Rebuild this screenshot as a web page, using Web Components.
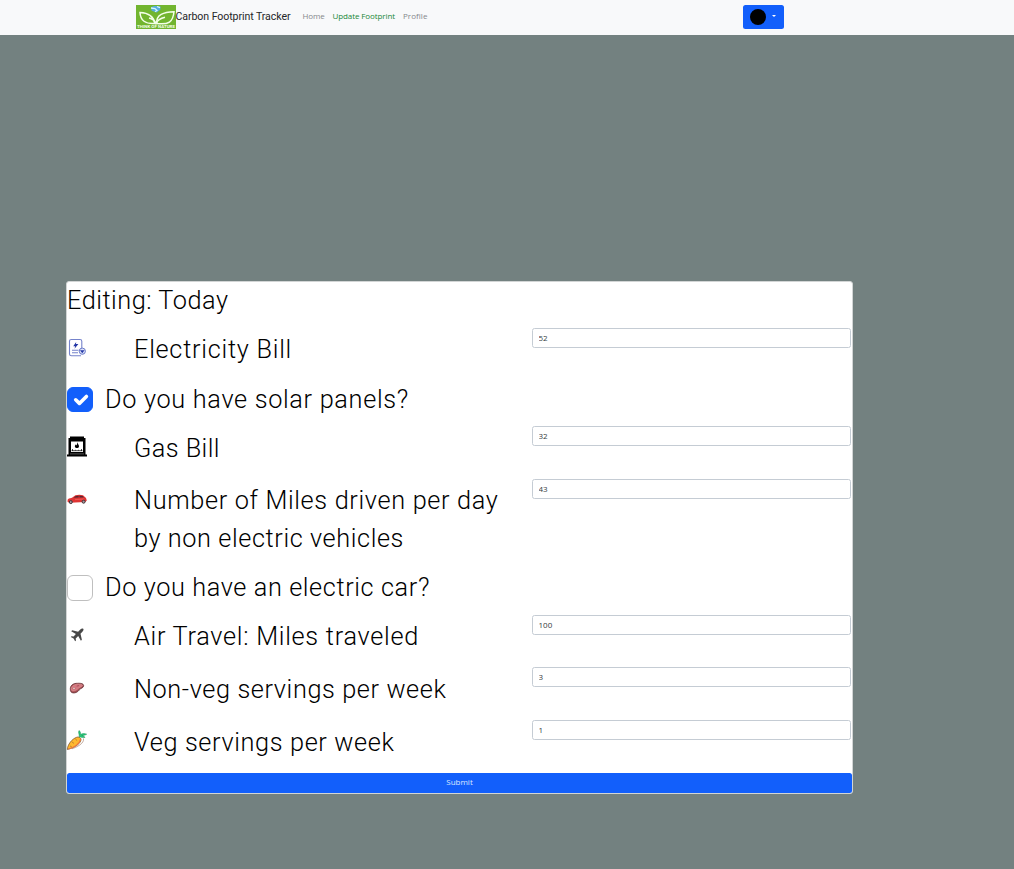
<!DOCTYPE html>
<html lang="en"><head><meta charset="utf-8"><title>Carbon Footprint Tracker</title>
<style>body{margin:0;background:#738180;font-family:Roboto,"Noto Sans",sans-serif;color:#000}</style></head>
<body><tracker-app></tracker-app>
<script>
const define=(name,html,init)=>customElements.define(name,class extends HTMLElement{
  connectedCallback(){
    if(this.shadowRoot)return;
    const t=document.createElement('template');
    t.innerHTML=typeof html==='function'?html(this):html;
    this.attachShadow({mode:'open'}).append(t.content.cloneNode(true));
    if(init)init(this);
  }
});
// Text run spaced evenly to span the width given by its "w" attribute.
define('fit-text','<style>:host{display:block;white-space:nowrap}span{display:inline-block}</style><span><slot></slot></span>',el=>{
  const s=el.shadowRoot.querySelector('span'),n=el.textContent.length;
  s.style.letterSpacing=((+el.getAttribute('w')-s.getBoundingClientRect().width)/n)+'px';
});
const art={
bill:'<g fill="none" stroke="#7583cb" stroke-width="1.1"><path d="M14.8 10V3.2Q14.8 1.5 13 1.5H4.3Q2.5 1.5 2.5 3V16Q2.5 17.8 4.5 17.8H14"/><path d="M5 12.3h6.5M5 14.8h6"/></g><path d="m9.2 4-3 4.3h2L7.5 10.8l3.9-4.7H9Z" fill="#2336a6"/><circle cx="15.3" cy="13.2" r="3.1" fill="#dce2fa" stroke="#6b7bca"/><path d="M13 12.2h4.5l-2.2 3Z" fill="#2438a6"/>',
stove:'<g transform="translate(0 .5)"><path d="M3 0h14v1.5h1.5V18H20v2H0v-2h1.5V1.5H3Z"/><path d="M4 5h12v10.5H4Z" fill="#fff"/><path d="M10.5 5.8c.1 2 2 2.8 1.4 4.6-.5 1.6-3.6 1.5-4-.1-.3-1.3.7-1.8 1.1-2.5l.5 1.2c.8-.8.5-2.1 1-3.2Z"/><path d="M4.5 14.2h11M5.5 12.5v2M8.5 13.3v.7M11.5 13.3v.7M14.5 12.5v2" stroke="#000" stroke-width=".7"/><path d="M3 17.4h14" stroke="#777" stroke-width=".7"/></g>',
car:'<path d="M.6 10.8Q1 9.4 5 8.7L8.4 6.2q4-1 7.6 0l3 2.7.8 2.6-1.5 1.5L3 13.8.6 13Z" fill="#df3434"/><path d="m6.6 8.8 2.3-1.8 2.8-.2v1.8Zm5.8-2 3.2.2 1.3 1.4-4.5.2Z" fill="#5c2730"/><path d="M8 10.6l9-.6" stroke="#f7726b" stroke-width=".6"/><g fill="#a79ca1" stroke="#41353a" stroke-width="1"><circle cx="3.8" cy="13.1" r="1.5"/><circle cx="16.6" cy="12.7" r="1.5"/></g>',
plane:'<path d="M16.2 3.8c-.7-.7-2-.1-2.9.7L11.1 6.7 5.2 5.2 4.2 6.3l4.7 2.6-2.3 2.6-2.1-.3-.7.8 2.8 1.5 1.5 2.7.9-.8-.3-2 2.5-2.4 2.7 4.7 1-1-1.4-5.9 2.1-2.2c.8-.9 1.3-2.1.6-2.8Z" fill="#484848"/>',
meat:'<g transform="translate(0 .7)"><path d="M3.3 11c.2-3.7 3.4-5.5 7.2-5.4 3.2-.2 6.3.3 6.1 2.5-.2 2.4-2.9 2.2-4.5 4.3-1.5 2.1-3.6 3-6 2.8-2-.2-2.9-1.5-2.8-4.2Z" fill="#a54d53" stroke="#632f34" stroke-width=".8"/><path d="M4.2 11.1c.5-3.5 4.3-4.9 7.5-4.6 3.1-.2 4.2.9 3.5 1.8-.9 1.1-3.1 1.2-4.5 3.1-1.4 1.6-6.8 3.3-6.5-.3Z" fill="#d47880" stroke="#e2a09f" stroke-width=".5"/><ellipse cx="7" cy="10.7" rx="1.2" ry=".8" fill="#fff0e9" stroke="#8e434b" stroke-width=".4"/><path d="m9.7 8.4 2.4-.5" stroke="#a94e5b"/></g>',
carrot:'<path d="M16.5 8.5c1 5-7 8.7-11.5 10.3" fill="none" stroke="#a88979" stroke-width=".7"/><path d="M.3 19.5C.5 14.8 4.8 9 9.6 7.3c2.4-1 5.1 1 4.2 3.4C12.3 15 6 18.2.3 19.5Z" fill="#ffb82e" stroke="#6f492d" stroke-width=".7"/><path d="M13.6 8.8C13 14 6.5 17.6 1.5 19" fill="none" stroke="#f4773d" stroke-width="1.1"/><path d="m5 12 2 1.4M8.4 9l1.8 1.7M3 16l1.7.7" stroke="#9a602c" stroke-width=".6"/><path d="M12.2 6.8C12.6 4 10.9 3.2 12 .5c1.2.8 1.7 2 1.5 4 1.8-1.1 3.9-1.2 6.2-.3-1.8 1-3.4 1.4-4.9 1.3 1.5.2 2.7.9 3.2 1.9-2 .4-3.6 0-5.8-.6Z" fill="#27c878" stroke="#168e54" stroke-width=".5"/>'
};
define('tracker-icon',el=>`<style>:host,svg{display:block;width:20px;height:20px;overflow:visible}</style><svg viewBox="0 0 20 20">${art[el.getAttribute('name')]}</svg>`);
define('brand-logo',`<style>:host{display:block;width:40px;height:24px}svg{display:block;overflow:visible}text{font:700 4.4px/1 Roboto,sans-serif;fill:#f5ffe9}</style><svg width="40" height="24" viewBox="0 0 40 24"><path fill="#72b52f" d="M0 0h40v24H0z"/><path d="M15 2.4q3-2.2 9.5-.8l-.2 3.2-3.6 2.8-5-1.8Z" fill="#55aee1"/><path d="m15 3 4 .5 2 2-2 1.3M21 1.5l3 1.2" fill="none" stroke="#d9f5fb" stroke-width="1.3"/><g fill="none" stroke="#f4ffe9" stroke-width="1.5"><path d="M19 18.5Q17 8 4 7.5 4.5 19.5 19 18.5Z"/><path d="M21 18.5C19.5 9.5 28 7 38 6.7 37 17 32.5 20 21 18.5Z"/><path d="M13 13q5 1 7 5.5Q22 14 29 12.3"/></g><text x="1" y="22.9" textLength="38" lengthAdjust="spacingAndGlyphs">THINK OF NATURE</text></svg>`);
define('nav-bar',`<style>
:host{display:block;height:35px;background:#f8f9fa}nav{display:flex;align-items:flex-start;padding:5px 230px 0 136px}
.brand{font-size:10.6px;line-height:24px;color:#252729;width:127px;margin-left:-.5px}.links{display:flex;font:8px/21px "Open Sans",sans-serif;color:#85888b}.links fit-text+fit-text{margin-left:8px}.links .active{color:#218838}
button{margin:0 0 0 auto;width:41px;height:24px;border:0;border-radius:2.5px;background:#125ffb;display:flex;align-items:center;padding:0 7px;gap:6px}.avatar{width:16px;height:16px;border-radius:50%;background:#000}.caret{border:2.5px solid transparent;border-top-color:#fff;border-bottom:0;margin-bottom:3px}</style><nav><brand-logo></brand-logo><div class="brand"><fit-text w="115">Carbon Footprint Tracker</fit-text></div><div class="links"><fit-text w="22">Home</fit-text><fit-text class="active" w="62.5">Update Footprint</fit-text><fit-text w="24.5">Profile</fit-text></div><button aria-label="Account"><span class="avatar"></span><span class="caret"></span></button></nav>`);
define('entry-row',el=>`<style>:host{display:grid;grid-template-columns:67px 398px 319px;box-sizing:border-box}tracker-icon{margin-top:10px}.label{padding-top:3px;font-size:25.3px;font-weight:350;line-height:38px}:host([low]) .label{padding-top:4px}
input{display:block;box-sizing:border-box;width:319px;height:20px;margin:0;border:1px solid #c5ccd4;border-radius:2.5px;padding:0 6px 2px 5.5px;font:8px "Open Sans",sans-serif;color:#343a40;background:#fff}</style>
<tracker-icon name="${el.getAttribute('icon')}"></tracker-icon><div class="label"><slot></slot></div><div><input value="${el.getAttribute('value')}"></div>`);
define('check-row',el=>`<style>:host{display:flex;font-size:25.3px;font-weight:350;line-height:38px}.box{box-sizing:border-box;width:26px;height:26px;margin:8px 12px 0 0;border:1px solid #bfbfbf;border-radius:6px;background:#fff}.on{background:#125ffb;border-color:#125ffb;height:25px}svg{display:block}.label{padding-top:2px}</style><div class="box ${el.hasAttribute('checked')?'on':''}">${el.hasAttribute('checked')?'<svg width="24" height="23" viewBox="0 0 24 23"><path d="m7.7 11.8 3.7 3.6 7-7" fill="none" stroke="#fff" stroke-width="3.6" stroke-linecap="round" stroke-linejoin="round"/></svg>':''}</div><div class="label"><slot></slot></div>`);
define('entry-card',`<style>:host{display:block;box-sizing:border-box;width:787px;height:513px;border:1px solid #d2d5d5;border-radius:3px;background:#fff}form{display:grid;grid-template-rows:46px 51px 47px 53px 88px 48px 52px 53px 53px 20px}
.title{font-size:25.3px;font-weight:350;line-height:38px}button{font:8px "Open Sans",sans-serif;color:#dce8ff;background:#125ffb;border:0;border-radius:2.5px;padding:0 0 3px;display:grid;place-content:center}</style>
<form><div class="title"><fit-text w="161.5">Editing: Today</fit-text></div>
<entry-row icon="bill" value="52"><fit-text w="158">Electricity Bill</fit-text></entry-row>
<check-row checked><fit-text w="304">Do you have solar panels?</fit-text></check-row>
<entry-row low icon="stove" value="32"><fit-text w="86">Gas Bill</fit-text></entry-row>
<entry-row icon="car" value="43"><fit-text w="364.5">Number of Miles driven per day</fit-text><fit-text w="270">by non electric vehicles</fit-text></entry-row>
<check-row><fit-text w="325">Do you have an electric car?</fit-text></check-row>
<entry-row icon="plane" value="100"><fit-text w="285">Air Travel: Miles traveled</fit-text></entry-row>
<entry-row low icon="meat" value="3"><fit-text w="312.5">Non-veg servings per week</fit-text></entry-row>
<entry-row low icon="carrot" value="1"><fit-text w="260.5">Veg servings per week</fit-text></entry-row>
<button type="button"><fit-text w="26.5">Submit</fit-text></button></form>`);
define('tracker-app','<style>:host{display:block;height:869px}main{padding:246px 0 0 66px}</style><nav-bar></nav-bar><main><entry-card></entry-card></main>');
</script></body></html>
